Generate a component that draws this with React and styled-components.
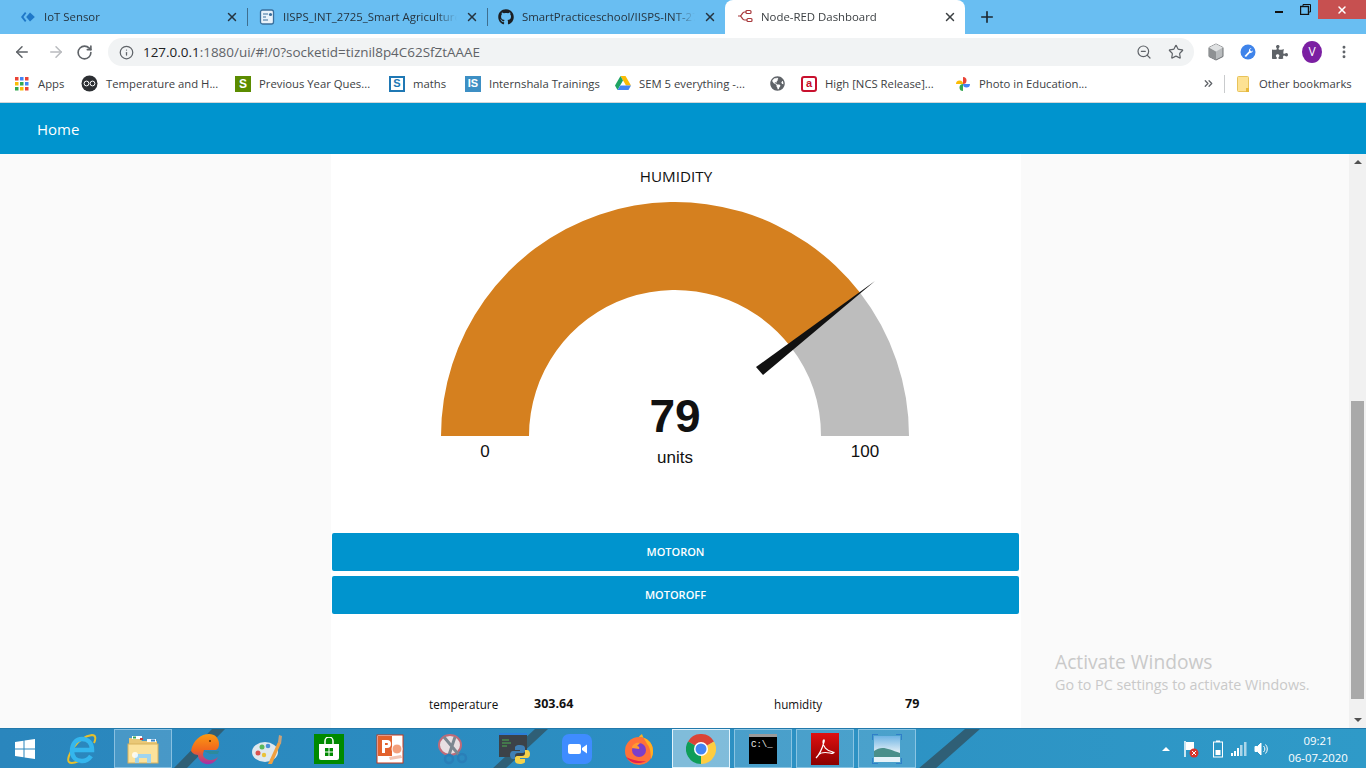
import React from 'react';
import styled, { createGlobalStyle } from 'styled-components';
import {
  ArrowLeft,
  ArrowRight,
  RotateCw,
  Info,
  ZoomOut,
  Star,
  X,
  Plus,
  ChevronsRight,
  EllipsisVertical,
} from 'lucide-react';
import { FaGithub, FaPuzzlePiece, FaGlobeAmericas } from 'react-icons/fa';

const GlobalStyle = createGlobalStyle`
  html, body {
    margin: 0;
    padding: 0;
    height: 100%;
    overflow: hidden;
    background: #fff;
    font-family: "Open Sans", "Noto Sans", "Liberation Sans", sans-serif;
  }
  * { box-sizing: border-box; }
`;

const Screen = styled.div`
  width: 1366px;
  height: 768px;
  display: flex;
  flex-direction: column;
  overflow: hidden;
`;

/* tab strip */
const TabStrip = styled.div`
  height: 34px;
  flex: none;
  display: flex;
  align-items: stretch;
  padding-left: 8px;
  background: #69bef2;
`;

const Tab = styled.div`
  width: ${(p) => p.$w}px;
  display: flex;
  align-items: center;
  gap: 8px;
  padding: 0 8px 1px ${(p) => p.$pad || 12}px;
  position: relative;
  font-size: 11.4px;
  color: ${(p) => (p.$active ? '#3c4043' : '#26343f')};
  background: ${(p) => (p.$active ? '#fff' : 'transparent')};
  border-radius: ${(p) => (p.$active ? '8px 8px 0 0' : '0')};

  ${(p) =>
    p.$sep &&
    `&::after {
      content: '';
      position: absolute;
      right: -1px;
      top: 8px;
      bottom: 8px;
      width: 1px;
      background: #3f6f8f;
    }`}
`;

const TabTitle = styled.span`
  flex: 1;
  white-space: nowrap;
  overflow: hidden;
  mask-image: linear-gradient(to right, #000 88%, transparent 100%);
`;

const NewTab = styled.div`
  width: 44px;
  display: flex;
  align-items: center;
  justify-content: center;
  color: #1c2730;
`;

const WindowControls = styled.div`
  margin-left: auto;
  display: flex;
  height: 19px;
  align-items: center;
`;

const WinBtn = styled.div`
  width: ${(p) => p.$w}px;
  height: 19px;
  display: flex;
  align-items: center;
  justify-content: center;
  background: ${(p) => (p.$close ? '#c75050' : 'transparent')};
  color: #fff;
`;

const MinGlyph = styled.div`
  width: 8px;
  height: 2px;
  margin-top: 5px;
  background: #111;
`;

/* address bar */
const Toolbar = styled.div`
  height: 36px;
  flex: none;
  display: flex;
  align-items: center;
  background: #fff;
`;

const NavBtn = styled.div`
  width: ${(p) => p.$w}px;
  flex: none;
  display: flex;
  justify-content: center;
  align-items: center;
  color: ${(p) => p.$color || '#5f6368'};
`;

const Omnibox = styled.div`
  width: 1086px;
  height: 28px;
  margin-left: 7px;
  flex: none;
  display: flex;
  align-items: center;
  padding-left: 11px;
  border-radius: 14px;
  background: #f1f3f4;
  color: #5f6368;
`;

const Url = styled.span`
  margin-left: 9px;
  font-size: 13.44px;
  white-space: nowrap;
  b {
    font-weight: 400;
    color: #202124;
  }
`;

const OmniIcons = styled.div`
  margin-left: auto;
  display: flex;
  align-items: center;
  gap: 16px;
  padding-right: 10px;
  color: #5f6368;
`;

const Avatar = styled.div`
  width: 22px;
  height: 22px;
  border-radius: 50%;
  background: #7b1fa2;
  color: #fff;
  font-size: 12px;
  line-height: 22px;
  text-align: center;
`;

/* bookmarks */
const BookmarkBar = styled.div`
  height: 33px;
  flex: none;
  display: flex;
  align-items: center;
  padding: 0 0 5px 15px;
  background: #fff;
  border-bottom: 1px solid #d4d6d8;
`;

const Bookmark = styled.div`
  width: ${(p) => p.$w}px;
  flex: none;
  display: flex;
  align-items: center;
  gap: ${(p) => (p.$gap ? p.$gap : 8)}px;
  font-size: 11.3px;
  color: #3c4043;
  white-space: nowrap;
`;

const BarDivider = styled.div`
  width: 1px;
  height: 18px;
  margin-right: 12px;
  background: #c9cbcd;
`;

/* dashboard */
const DashHeader = styled.header`
  height: 51px;
  flex: none;
  display: flex;
  align-items: center;
  padding-left: 37px;
  background: #0094ce;
  color: #fff;
  font-size: 15px;
`;

const Body = styled.div`
  flex: 1;
  min-height: 0;
  display: flex;
`;

const Canvas = styled.main`
  flex: 1;
  padding-left: 331px;
  position: relative;
  background: #fafafa;
`;

const Panel = styled.section`
  width: 690px;
  height: 100%;
  display: flex;
  flex-direction: column;
  background: #fff;
`;

const GaugeTitle = styled.div`
  height: 42px;
  flex: none;
  display: flex;
  align-items: center;
  justify-content: center;
  padding-top: 1px;
  font-size: 15.2px;
  color: #111;
`;

const GaugeSvg = styled.svg`
  display: block;
  flex: none;
  font-family: "Liberation Sans", Arial, sans-serif;
  fill: #111;
`;

const ActionButton = styled.button`
  width: 687px;
  height: 38px;
  flex: none;
  margin: 0 0 5px 1px;
  padding: 0 0 2px;
  border: 0;
  border-radius: 2px;
  background: #0094ce;
  color: #fff;
  font-family: inherit;
  font-size: 11px;
  font-weight: 600;
`;

const Readings = styled.div`
  margin-top: auto;
  height: 33px;
  flex: none;
  display: grid;
  grid-template-columns: 105px 240px 131px auto;
  align-items: start;
  padding-left: 98px;
  font-size: 11.7px;
  line-height: 18px;
  color: #111;
`;

const ReadingValue = styled.span`
  font-size: 12.5px;
  font-weight: 700;
`;

const Watermark = styled.div`
  position: absolute;
  left: 1055px;
  top: 495px;
  color: #c9c9c9;
  font-size: 14.3px;
  line-height: 20px;
  white-space: nowrap;
  pointer-events: none;
  strong {
    display: block;
    font-size: 19.2px;
    font-weight: 400;
    line-height: 26px;
  }
`;

const Scrollbar = styled.div`
  width: 17px;
  flex: none;
  display: flex;
  flex-direction: column;
  align-items: center;
  justify-content: space-between;
  padding: 6px 0 6px;
  background: #f1f1f1;
  position: relative;
`;

const ScrollArrow = styled.div`
  width: 0;
  height: 0;
  flex: none;
  border-left: 4px solid transparent;
  border-right: 4px solid transparent;
  border-${(p) => (p.$up ? 'bottom' : 'top')}: 4px solid ${(p) => p.$color || '#505050'};
`;

const ScrollThumb = styled.div`
  position: absolute;
  left: 2px;
  top: 247px;
  width: 13px;
  height: 298px;
  background: #a9a9a9;
`;

/* taskbar */
const Taskbar = styled.footer`
  height: 40px;
  flex: none;
  display: flex;
  align-items: stretch;
  position: relative;
  background: linear-gradient(to right, #2a86bd 0%, #2c8fc2 50%, #2f9ac8 100%);
  border-top: 1px solid #2279ab;
`;

const Wallpaper = styled.svg`
  position: absolute;
  inset: 0;
`;

const StartBtn = styled.div`
  width: 50px;
  flex: none;
  display: flex;
  align-items: center;
  justify-content: center;
  position: relative;
`;

const TaskItem = styled.div`
  width: 58px;
  margin: 0 2px;
  flex: none;
  display: flex;
  align-items: center;
  justify-content: center;
  position: relative;
  ${(p) =>
    p.$open &&
    `border: 1px solid rgba(190, 225, 245, 0.55);
     background: rgba(255, 255, 255, 0.14);`}
  ${(p) =>
    p.$active &&
    `border: 1px solid rgba(235, 248, 255, 0.9);
     background: rgba(255, 255, 255, 0.4);`}
`;

const Tray = styled.div`
  position: absolute;
  left: 1162px;
  top: 0;
  bottom: 0;
  display: flex;
  align-items: center;
  color: #fff;
`;

const TraySlot = styled.div`
  display: flex;
  margin-left: ${(p) => p.$ml}px;
`;

const Clock = styled.div`
  width: 60px;
  margin-left: 18px;
  text-align: center;
  font-size: 11.4px;
  line-height: 17px;
  color: #fff;
`;

/* small drawings */
const ToolkitLogo = () => (
  <svg width="16" height="16" viewBox="0 0 16 16">
    <path d="M5 3 1 8l4 5 1.400-1.200L3.400 8l3-3.800z" fill="#1f78c8" />
    <path d="M10 3.500 14.800 8 10 12.500 6.200 8z" fill="#1f78c8" />
  </svg>
);

const DocLogo = () => (
  <svg width="16" height="16" viewBox="0 0 16 16" fill="none">
    <rect x="1.500" y="1" width="13" height="14" rx="2" stroke="#3a6f9c" strokeWidth="1.300" fill="#e9f2fa" />
    <path d="M4 5h5M4 8h3M4 11h5" stroke="#3a6f9c" strokeWidth="1.200" />
    <circle cx="11.500" cy="5.500" r="1.600" fill="#3a6f9c" />
  </svg>
);

const NodeRedLogo = () => (
  <svg width="16" height="16" viewBox="0 0 16 16" fill="none" stroke="#a8383b" strokeWidth="1.200">
    <path d="M1 7h2c2 0 2-4 4.500-4H9M3 7c2 0 2 4 4.500 4H10" />
    <rect x="9" y="1.500" width="5" height="3" rx="1" />
    <rect x="10" y="9.500" width="5" height="3" rx="1" />
  </svg>
);

const AppsGrid = () => (
  <svg width="14" height="14" viewBox="0 0 14 14">
    {['#ea4335', '#4285f4', '#ea4335', '#fbbc05', '#34a853', '#4285f4', '#34a853', '#fbbc05', '#ea4335'].map((c, i) => (
      <rect key={i} x={(i % 3) * 5} y={Math.floor(i / 3) * 5} width="3.500" height="3.500" fill={c} />
    ))}
  </svg>
);

const OwlLogo = () => (
  <svg width="17" height="17" viewBox="0 0 17 17" fill="none">
    <circle cx="8.500" cy="8.500" r="8" fill="#2c2f33" />
    <circle cx="5.500" cy="8.500" r="2.400" stroke="#fff" />
    <circle cx="11.500" cy="8.500" r="2.400" stroke="#fff" />
  </svg>
);

const LetterBadge = styled.div`
  width: ${(p) => p.$s || 16}px;
  height: ${(p) => p.$s || 16}px;
  flex: none;
  display: flex;
  align-items: center;
  justify-content: center;
  background: ${(p) => p.$bg};
  color: ${(p) => p.$fg || '#fff'};
  border: ${(p) => p.$border || '0'};
  border-radius: ${(p) => p.$r || 0}px;
  font-family: "Liberation Sans", sans-serif;
  font-size: ${(p) => p.$fs || 12}px;
  font-weight: 700;
  line-height: 1;
`;

const DriveLogo = () => (
  <svg width="16" height="15" viewBox="0 0 16 15">
    <path d="M5.500 0h5L16 9.500h-5z" fill="#fbbc05" />
    <path d="M5.500 0 0 9.500 2.500 14 8 4.500z" fill="#1fa463" />
    <path d="M2.500 14h11L16 9.500H5.300z" fill="#4285f4" />
  </svg>
);

const PhotosLogo = () => (
  <svg width="16" height="16" viewBox="0 0 16 16">
    <path d="M8 8V1a3.500 3.500 0 0 1 0 7z" fill="#ea4335" />
    <path d="M8 8h7a3.500 3.500 0 0 1-7 0z" fill="#4285f4" />
    <path d="M8 8v7a3.500 3.500 0 0 1 0-7z" fill="#34a853" />
    <path d="M8 8H1a3.500 3.500 0 0 1 7 0z" fill="#fbbc05" />
  </svg>
);

const FolderLogo = () => (
  <svg width="12" height="16" viewBox="0 0 12 16">
    <rect x="0.500" y="0.500" width="11" height="15" rx="1" fill="#fde293" stroke="#e8c35a" />
    <rect x="9" y="12" width="3" height="4" fill="#e8b93a" />
  </svg>
);

const BoxExt = () => (
  <svg width="18" height="18" viewBox="0 0 18 18">
    <path d="M9 1l7 3.500v9L9 17l-7-3.500v-9z" fill="#b9bcbe" stroke="#6d7073" />
    <path d="M9 8.500V17L2 13.500v-9z" fill="#8e9193" />
    <path d="M9 1l7 3.500L9 8.500 2 4.500z" fill="#dfe1e2" />
  </svg>
);

const WrenchExt = () => (
  <svg width="16" height="16" viewBox="0 0 16 16">
    <circle cx="8" cy="8" r="7.500" fill="#3f84ea" />
    <path d="M4.500 12 9 7.300a2.600 2.600 0 0 1 2.600-3.300L10 5.600l.6 1.400 1.500.4 1-1.500A3 3 0 0 1 9.800 9L6 13z" fill="#fff" />
  </svg>
);

const WinLogo = () => (
  <svg width="20" height="20" viewBox="0 0 20 20" fill="#fff">
    <path d="M0 3l8.500-1.200V9.500H0zM9.500 1.600 20 0v9.500H9.500zM0 10.500h8.500v7.700L0 17zM9.500 10.500H20V20L9.500 18.400z" />
  </svg>
);

const IeLogo = () => (
  <svg width="32" height="32" viewBox="0 0 32 32" fill="none">
    <path d="M4 29C0 25 12 4 27 2c4 0 4 4 2 8M4 29c2 2 8 0 12-2" stroke="#e6c02e" strokeWidth="2" />
    <path d="M8 17h19c0-7-4-11-10-11S7 11 7 18s5 10 10 10c4 0 7-2 9-5" stroke="#34b6ee" strokeWidth="4.500" />
  </svg>
);

const ExplorerLogo = () => (
  <svg width="32" height="30" viewBox="0 0 32 30">
    <path d="M2 4h11l2 3h15v4H2z" fill="#e9c877" />
    <rect x="5" y="2" width="10" height="3" fill="#fff" />
    <rect x="6" y="2.500" width="3" height="2" fill="#3aa655" />
    <rect x="13" y="4" width="3" height="2" fill="#c93a3a" />
    <rect x="20" y="5" width="9" height="3" fill="#fff" />
    <rect x="24" y="5.500" width="4" height="2" fill="#3a87c9" />
    <rect x="1" y="10" width="30" height="19" fill="#fbe29c" stroke="#d8b15c" />
    <path d="M8 29v-9h16v9h-4v-5h-8v5z" fill="#9fd4ee" />
    <circle cx="8" cy="21" r="3" fill="#fff" opacity="0.8" />
  </svg>
);

const WhaleLogo = () => (
  <svg width="30" height="32" viewBox="0 0 30 32">
    <defs>
      <linearGradient id="whalefill" x1="0" y1="0" x2="0" y2="1">
        <stop offset="0" stopColor="#fb9a12" />
        <stop offset="0.55" stopColor="#f0641e" />
        <stop offset="1" stopColor="#a12fb0" />
      </linearGradient>
    </defs>
    <path d="M1 18C3 7 11 1 19 1c6 0 10 4 10 10 0 3-1 5-3 6H14l-1 4c0 4 4 6 8 6 3 0 5-1 7-3-2 5-7 8-12 7-5-1-8-5-8-9-2 0-5-1-7-4z" fill="url(#whalefill)" />
    <path d="M14 18h15l-1 3H20z" fill="#2c8a9c" />
    <circle cx="20" cy="8" r="1" fill="#5b2b00" />
  </svg>
);

const PaintLogo = () => (
  <svg width="32" height="32" viewBox="0 0 32 32">
    <ellipse cx="14" cy="19" rx="13" ry="10" fill="#dfe8ee" />
    <circle cx="7" cy="20" r="2.500" fill="#d9534f" />
    <circle cx="11" cy="14" r="2.500" fill="#5cb85c" />
    <circle cx="17" cy="13" r="2.300" fill="#4a90d9" />
    <circle cx="13" cy="22" r="2.200" fill="#e9c23a" />
    <path d="M17 31 27 9l3 1-9 21z" fill="#f0a040" />
    <path d="M27 9l1-7 3 1-1 8z" fill="#c9a27a" />
  </svg>
);

const StoreLogo = () => (
  <LetterBadge $s={30} $bg="#008a00">
    <svg width="22" height="24" viewBox="0 0 22 24" fill="#fff">
      <path d="M1 7h20v14a2 2 0 0 1-2 2H3a2 2 0 0 1-2-2z" />
      <path d="M7 7V4a4 4 0 0 1 8 0v3" fill="none" stroke="#fff" strokeWidth="1.500" />
      <path d="M7 11h3.500v3.500H7zM11.500 11H15v3.500h-3.500zM7 15.500h3.500V19H7zM11.500 15.500H15V19h-3.500z" fill="#008a00" />
    </svg>
  </LetterBadge>
);

const PptLogo = () => (
  <svg width="30" height="30" viewBox="0 0 30 30">
    <rect x="1" y="1" width="26" height="28" fill="#fff" stroke="#c8391b" />
    <rect x="2" y="2" width="14" height="20" fill="#e2622d" />
    <path d="M6 6h5a4 4 0 0 1 0 8H9v5H6zM9 9v2h2a1 1 0 0 0 0-2z" fill="#fff" />
    <circle cx="21" cy="15" r="5" fill="#f3a07c" stroke="#fff" />
    <path d="M13 23l12-2 1 3-12 2z" fill="#f2c4b2" />
  </svg>
);

const SnipLogo = () => (
  <svg width="32" height="32" viewBox="0 0 32 32" fill="none">
    <ellipse cx="13" cy="12" rx="11" ry="10" fill="#e8dfe2" stroke="#c06a78" strokeWidth="2" />
    <path d="M7 4 22 22M18 4 12 22" stroke="#7c8790" strokeWidth="3" />
    <circle cx="12" cy="26" r="4" stroke="#2a7fb8" strokeWidth="2.500" />
    <circle cx="25" cy="25" r="4" stroke="#2a7fb8" strokeWidth="2.500" />
  </svg>
);

const PythonLogo = () => (
  <svg width="32" height="32" viewBox="0 0 32 32">
    <rect x="0" y="0" width="28" height="24" fill="#3c4248" />
    <rect x="0" y="0" width="28" height="2" fill="#2a7fd8" />
    <path d="M3 7h7M3 10h9M3 13h5" stroke="#4caf50" strokeWidth="1" />
    <path d="M21 12c-5 0-5 2-5 3v2h5v1h-7c-2 0-3 2-3 4s1 4 3 4h2v-3c0-2 1-3 3-3h5c1 0 2-1 2-2v-3c0-2-2-3-5-3z" fill="#3f7fb5" />
    <path d="M21 31c5 0 5-2 5-3v-2h-5v-1h7c2 0 3-2 3-4s-1-4-3-4h-2v3c0 2-1 3-3 3h-5c-1 0-2 1-2 2v3c0 2 2 3 5 3z" fill="#f5d24a" />
  </svg>
);

const ZoomLogo = () => (
  <svg width="30" height="30" viewBox="0 0 30 30">
    <rect width="30" height="30" rx="7" fill="#3f8cff" />
    <rect x="6" y="10" width="13" height="10" rx="2" fill="#fff" />
    <path d="M20 14l5-3.500v9L20 16z" fill="#fff" />
  </svg>
);

const FirefoxLogo = () => (
  <svg width="32" height="32" viewBox="0 0 32 32">
    <circle cx="16" cy="18" r="14" fill="#ff7139" />
    <path d="M16 4c7 0 14 5 14 14 0 4-1 6-2 8 0-6-1-12-4-15-1-3-4-6-5-10-1 1-3 2-3 3z" fill="#ffb020" />
    <circle cx="16" cy="17" r="7" fill="#7b3fc9" />
    <path d="M9 15c0-4 5-6 8-5l-3 3c2 0 3 2 2 3z" fill="#ff9a30" />
    <path d="M3 24c4 6 13 8 20 4-6 1-14-1-20-4z" fill="#e3204c" />
  </svg>
);

const ChromeLogo = () => (
  <svg width="30" height="30" viewBox="0 0 30 30">
    <path d="M15 15 2 7.500A15 15 0 0 1 28 7.500z" fill="#db4437" />
    <path d="M15 15 28 7.500A15 15 0 0 1 15 30z" fill="#ffcd40" />
    <path d="M15 15 15 30A15 15 0 0 1 2 7.500z" fill="#0f9d58" />
    <circle cx="15" cy="15" r="7" fill="#fff" />
    <circle cx="15" cy="15" r="5.500" fill="#4285f4" />
  </svg>
);

const CmdLogo = styled.div`
  width: 28px;
  height: 30px;
  background: linear-gradient(#9a9a9a 0 3px, #000 3px);
  color: #e8e8e8;
  font-family: "Liberation Mono", monospace;
  font-size: 9px;
  line-height: 9px;
  padding: 7px 0 0 2px;
  white-space: nowrap;
`;

const PdfLogo = () => (
  <svg width="28" height="32" viewBox="0 0 28 32">
    <defs>
      <linearGradient id="pdfred" x1="0" y1="0" x2="0" y2="1">
        <stop offset="0" stopColor="#e01010" />
        <stop offset="1" stopColor="#8a0000" />
      </linearGradient>
    </defs>
    <rect width="28" height="32" fill="url(#pdfred)" />
    <path d="M5 25c3-3 6-9 8-16 1-3-1-3-1 0 0 4 3 9 10 10 3 0-1 2-3 1-5-1-10 0-12 2" fill="none" stroke="#fff" strokeWidth="1.200" />
  </svg>
);

const PhotoLogo = () => (
  <svg width="30" height="30" viewBox="0 0 30 30">
    <defs>
      <linearGradient id="sky" x1="0" y1="0" x2="0" y2="1">
        <stop offset="0" stopColor="#6fb4e4" />
        <stop offset="0.6" stopColor="#dcecf5" />
      </linearGradient>
    </defs>
    <rect x="2" y="2" width="26" height="26" fill="url(#sky)" />
    <path d="M2 17c8-6 14-2 26 2v5H2z" fill="#4a8f8a" />
    <rect x="2" y="23" width="26" height="5" fill="#e6f2f8" />
    <path d="M0 6V0h6M24 0h6v6M30 24v6h-6M6 30H0v-6" fill="none" stroke="#2f7fc9" strokeWidth="2" />
  </svg>
);

const TrayFlag = () => (
  <svg width="16" height="18" viewBox="0 0 16 18">
    <path d="M2 1v16" stroke="#fff" strokeWidth="1.500" />
    <path d="M3 2h8v8H3z" fill="#fff" />
    <circle cx="11" cy="13" r="4.500" fill="#d9342b" />
    <path d="M9 11l4 4M13 11l-4 4" stroke="#fff" />
  </svg>
);

const TrayBattery = () => (
  <svg width="10" height="18" viewBox="0 0 10 18" fill="none">
    <rect x="0.500" y="2" width="9" height="15" stroke="#fff" />
    <rect x="3" y="0.500" width="4" height="1.500" fill="#fff" />
    <rect x="2.500" y="10" width="5" height="5" fill="#fff" />
  </svg>
);

const TraySignal = () => (
  <svg width="16" height="16" viewBox="0 0 16 16" fill="#fff">
    <rect x="0" y="12" width="2" height="3" />
    <rect x="3" y="10" width="2" height="5" />
    <rect x="6" y="7" width="2" height="8" />
    <rect x="9" y="4" width="2.500" height="11" opacity="0.6" />
    <rect x="13" y="1" width="2.500" height="14" opacity="0.6" />
  </svg>
);

const TraySpeaker = () => (
  <svg width="16" height="16" viewBox="0 0 16 16" fill="none" stroke="#fff">
    <path d="M1 5.500h2.500L7 2v12L3.500 10.500H1z" fill="#fff" />
    <path d="M9.500 5a4 4 0 0 1 0 6M11.500 3.500a6.500 6.500 0 0 1 0 9" />
  </svg>
);

const Gauge = () => (
  <GaugeSvg width="690" height="337" viewBox="331 196 690 337">
    <path d="M441 436A234 234 0 0 1 859.900 292.600L790.400 346.500A146 146 0 0 0 529 436Z" fill="#d5801f" />
    <path d="M859.900 292.600A234 234 0 0 1 909 436H821A146 146 0 0 0 790.400 346.500Z" fill="#bdbdbd" />
    <path d="M875 281 756 367 763 375Z" fill="#111" />
    <text x="675" y="432" textAnchor="middle" fontSize="46" fontWeight="700">79</text>
    <text x="675" y="463" textAnchor="middle" fontSize="17">units</text>
    <text x="485" y="457" textAnchor="middle" fontSize="17">0</text>
    <text x="865" y="457" textAnchor="middle" fontSize="17">100</text>
  </GaugeSvg>
);

const App = () => {
  return (
    <Screen>
      <GlobalStyle />

      <TabStrip>
        <Tab $w={239} $sep>
          <ToolkitLogo />
          <TabTitle>IoT Sensor</TabTitle>
          <X size={14} strokeWidth={2.5} color="#26343f" />
        </Tab>
        <Tab $w={240} $sep>
          <DocLogo />
          <TabTitle>IISPS_INT_2725_Smart Agriculture</TabTitle>
          <X size={14} strokeWidth={2.5} color="#26343f" />
        </Tab>
        <Tab $w={238} $pad={11}>
          <FaGithub size={16} color="#1b1f23" />
          <TabTitle>SmartPracticeschool/IISPS-INT-2725</TabTitle>
          <X size={14} strokeWidth={2.5} color="#26343f" />
        </Tab>
        <Tab $w={240} $active>
          <NodeRedLogo />
          <TabTitle>Node-RED Dashboard</TabTitle>
          <X size={14} strokeWidth={2.5} color="#3c4043" />
        </Tab>
        <NewTab>
          <Plus size={18} strokeWidth={2.2} />
        </NewTab>
        <WindowControls>
          <WinBtn $w={26}>
            <MinGlyph />
          </WinBtn>
          <WinBtn $w={26}>
            <svg width="11" height="11" viewBox="0 0 11 11" fill="none" stroke="#111">
              <rect x="0.500" y="2.500" width="8" height="8" strokeWidth="1.400" />
              <path d="M3 2V.5h7.500V8H9" />
            </svg>
          </WinBtn>
          <WinBtn $w={48} $close>
            <X size={12} strokeWidth={3} />
          </WinBtn>
        </WindowControls>
      </TabStrip>

      <Toolbar>
        <NavBtn $w={44}><ArrowLeft size={18} strokeWidth={2} /></NavBtn>
        <NavBtn $w={24}><ArrowRight size={18} strokeWidth={2} color="#b9bbbe" /></NavBtn>
        <NavBtn $w={33}><RotateCw size={17} strokeWidth={2.3} /></NavBtn>
        <Omnibox>
          <Info size={15} strokeWidth={2} />
          <Url><b>127.0.0.1</b>:1880/ui/#!/0?socketid=tiznil8p4C62SfZtAAAE</Url>
          <OmniIcons>
            <ZoomOut size={16} strokeWidth={1.8} />
            <Star size={16} strokeWidth={1.8} />
          </OmniIcons>
        </Omnibox>
        <NavBtn $w={44}><BoxExt /></NavBtn>
        <NavBtn $w={20}><WrenchExt /></NavBtn>
        <NavBtn $w={44}><FaPuzzlePiece size={16} /></NavBtn>
        <NavBtn $w={20}><Avatar>V</Avatar></NavBtn>
        <NavBtn $w={44}><EllipsisVertical size={16} strokeWidth={2.4} /></NavBtn>
      </Toolbar>

      <BookmarkBar>
        <Bookmark $w={66} $gap={9}><AppsGrid />Apps</Bookmark>
        <Bookmark $w={154}><OwlLogo />Temperature and H...</Bookmark>
        <Bookmark $w={154}><LetterBadge $bg="#5b8c00">S</LetterBadge>Previous Year Ques...</Bookmark>
        <Bookmark $w={76}>
          <LetterBadge $bg="#fff" $fg="#1f78b4" $border="2px solid #1f78b4" $fs={11}>S</LetterBadge>maths
        </Bookmark>
        <Bookmark $w={150}><LetterBadge $bg="#3d8fc4" $fs={11}>IS</LetterBadge>Internshala Trainings</Bookmark>
        <Bookmark $w={155}><DriveLogo />SEM 5 everything -...</Bookmark>
        <Bookmark $w={31}><FaGlobeAmericas size={15} color="#5f6368" /></Bookmark>
        <Bookmark $w={154}>
          <LetterBadge $bg="#fff" $fg="#c8102e" $border="2px solid #c8102e" $r={3} $fs={11}>a</LetterBadge>High [NCS Release]...
        </Bookmark>
        <Bookmark $w={247}><PhotosLogo />Photo in Education...</Bookmark>
        <Bookmark $w={22}><ChevronsRight size={13} strokeWidth={2.4} color="#5f6368" /></Bookmark>
        <BarDivider />
        <Bookmark $w={120} $gap={10}><FolderLogo />Other bookmarks</Bookmark>
      </BookmarkBar>

      <DashHeader>Home</DashHeader>

      <Body>
        <Canvas>
          <Panel>
            <GaugeTitle>HUMIDITY</GaugeTitle>
            <Gauge />
            <ActionButton>MOTORON</ActionButton>
            <ActionButton>MOTOROFF</ActionButton>
            <Readings>
              <span>temperature</span>
              <ReadingValue>303.64</ReadingValue>
              <span>humidity</span>
              <ReadingValue>79</ReadingValue>
            </Readings>
          </Panel>
          <Watermark>
            <strong>Activate Windows</strong>
            Go to PC settings to activate Windows.
          </Watermark>
        </Canvas>
        <Scrollbar>
          <ScrollArrow $up />
          <ScrollThumb />
          <ScrollArrow />
        </Scrollbar>
      </Body>

      <Taskbar>
        <Wallpaper width="1366" height="40" viewBox="0 0 1366 40">
          <path d="M173 40 212 0H225L186 40ZM492 40 535 0H548L505 40ZM918 40 965 0H980L935 40Z" fill="#2f5f76" />
        </Wallpaper>
        <StartBtn><WinLogo /></StartBtn>
        <TaskItem><IeLogo /></TaskItem>
        <TaskItem $open><ExplorerLogo /></TaskItem>
        <TaskItem><WhaleLogo /></TaskItem>
        <TaskItem><PaintLogo /></TaskItem>
        <TaskItem><StoreLogo /></TaskItem>
        <TaskItem><PptLogo /></TaskItem>
        <TaskItem><SnipLogo /></TaskItem>
        <TaskItem><PythonLogo /></TaskItem>
        <TaskItem><ZoomLogo /></TaskItem>
        <TaskItem><FirefoxLogo /></TaskItem>
        <TaskItem $active><ChromeLogo /></TaskItem>
        <TaskItem $open><CmdLogo>C:\_</CmdLogo></TaskItem>
        <TaskItem $open><PdfLogo /></TaskItem>
        <TaskItem $open><PhotoLogo /></TaskItem>
        <Tray>
          <ScrollArrow $up $color="#fff" />
          <TraySlot $ml={13}><TrayFlag /></TraySlot>
          <TraySlot $ml={14}><TrayBattery /></TraySlot>
          <TraySlot $ml={8}><TraySignal /></TraySlot>
          <TraySlot $ml={7}><TraySpeaker /></TraySlot>
          <Clock>
            09:21
            <br />
            06-07-2020
          </Clock>
        </Tray>
      </Taskbar>
    </Screen>
  );
};

export default App;
